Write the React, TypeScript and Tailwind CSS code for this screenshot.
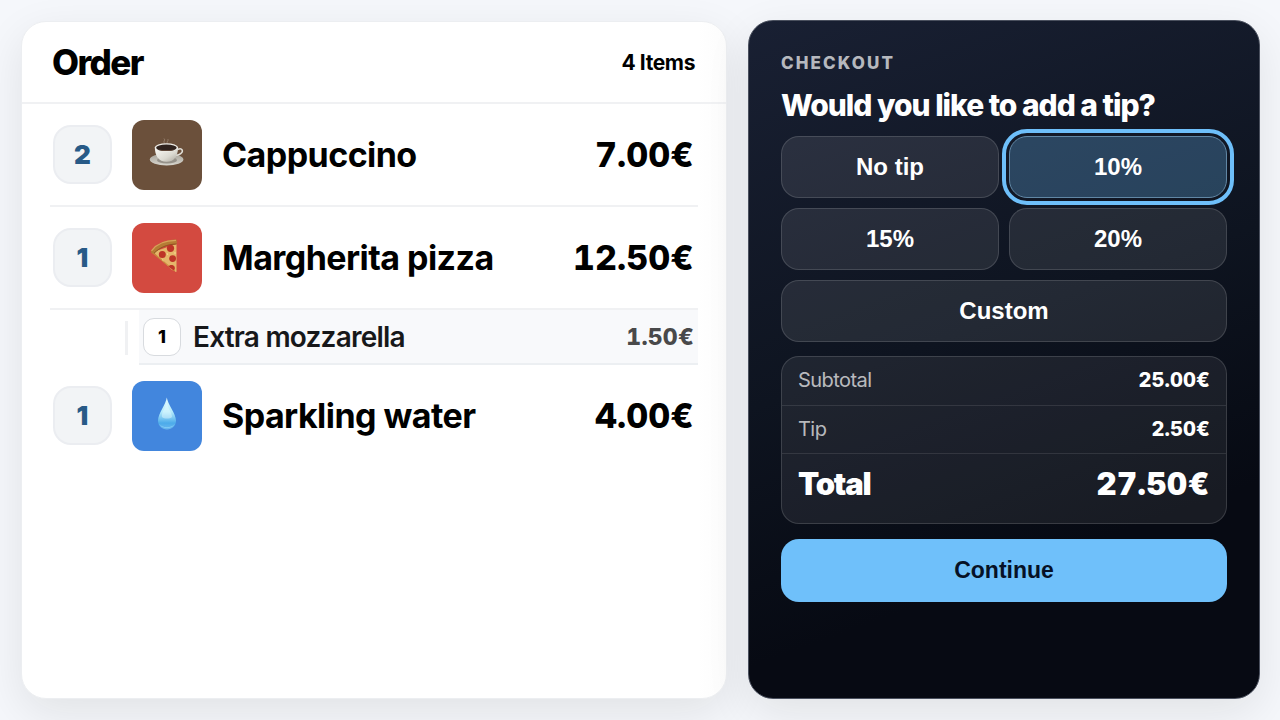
import type { ReactNode } from "react";

function CoffeeIcon() {
  return (
    <svg width="36" height="32" viewBox="0 0 36 32">
      <defs>
        <linearGradient id="cup" x1="0" y1="0" x2="1" y2="1">
          <stop offset="0" stopColor="#fbfaf6" />
          <stop offset="0.6" stopColor="#dcdad2" />
          <stop offset="1" stopColor="#a9a59b" />
        </linearGradient>
        <linearGradient id="saucer" x1="0" y1="0" x2="0" y2="1">
          <stop offset="0" stopColor="#a5a198" />
          <stop offset="1" stopColor="#d8d6ce" />
        </linearGradient>
      </defs>
      <path d="M15.5 6.5C13.5 4 17 3.500 15 1.500M18.500 6.500C17 4.500 20.500 3.500 18.500 2" fill="none" stroke="#c9b9a9" strokeWidth="0.9" opacity="0.45" />
      <ellipse cx="17.600" cy="22.500" rx="16.800" ry="6" fill="url(#saucer)" />
      <ellipse cx="18" cy="23.200" rx="10" ry="3.400" fill="#96928a" />
      <path d="M28.500 12.500c5-2.200 6.200 2 3.200 4.200-1.500 1.200-3.500 1.500-5 1.700" fill="none" stroke="#e1dfd8" strokeWidth="1.500" />
      <path d="M5.800 10.500c.3 6.500 2.200 10.800 6.500 13.200 3.200 1.400 7.200 1.400 10.500 0 4.300-2.400 6-6.700 6.300-13.200z" fill="url(#cup)" />
      <ellipse cx="17.400" cy="10.500" rx="11.700" ry="4.300" fill="#eeece6" />
      <ellipse cx="17.400" cy="10.800" rx="10.300" ry="3.300" fill="#30231e" />
      <path d="M9.500 12.500c4 2 12 2 16 0-4 1-12 1-16 0z" fill="#705544" />
    </svg>
  );
}

function PizzaIcon() {
  return (
    <svg className="mr-[7px]" width="28" height="34" viewBox="0 0 28 34">
      <path d="M3 13L26.500 5v27.500c-.5 1-1.200.5-1.700-.7L22 31z" fill="#e5b66b" />
      <path d="M3 13L24.800 31.500l-.2 1L2 14z" fill="#c98b3d" />
      <path d="M.8 12.800C5 5.500 15 .8 26.200.6c.8.700.9 3.400.3 4.300C17 5 9.500 8.800 4 14.600 2.500 15 .8 13.800.8 12.800z" fill="#b57b35" />
      <path d="M1.500 11.800C6 5.500 15 1.500 26 1.400" fill="none" stroke="#d7a259" strokeWidth="1.300" />
      <path d="M4 14.300C9.500 8.600 17 5.200 26.500 5" fill="none" stroke="#87501d" strokeWidth="0.900" />
      <circle cx="20.500" cy="9.300" r="3.600" fill="#bd3427" />
      <circle cx="12.300" cy="15.600" r="3.500" fill="#bd3427" />
      <circle cx="22.600" cy="19.600" r="3.400" fill="#bd3427" />
      <path d="M18.200 27.600c1.500-2.300 5.300-2.100 6.500.3.400 1.500 0 2.500-.8 3.600z" fill="#bd3427" />
      <path d="M12 20.500l1.500 1.400M17 14l.8 2M25 13v2" stroke="#f6d993" strokeWidth="1" />
    </svg>
  );
}

function DropIcon() {
  return (
    <svg width="20" height="33" viewBox="0 0 20 33">
      <defs>
        <linearGradient id="drop" x1="0" y1="0" x2="0" y2="1">
          <stop offset="0" stopColor="#e4fbff" />
          <stop offset="0.45" stopColor="#b5ebfb" />
          <stop offset="0.8" stopColor="#4cabea" />
          <stop offset="1" stopColor="#6bb9ef" />
        </linearGradient>
      </defs>
      <path d="M9.800.5C9 7 1 17 1 23.500 1 29 5 32.500 10 32.500s9-3.500 9-9C19 17 10.600 7 9.800.5z" fill="url(#drop)" />
      <path d="M2.200 26.500c2 5 13.600 5 15.600 0-1.500 6-14 6-15.600 0z" fill="#8fd2f7" opacity="0.800" />
      <path d="M9.700 5C8.500 11 4 16 5 20c2 2 8 2 10 0 0-4-4.300-9-5.300-15z" fill="#e6fbff" opacity="0.450" />
    </svg>
  );
}

function OrderRow({ qty, tile, icon, name, price, divider = true }: {
  qty: number;
  tile: string;
  icon: ReactNode;
  name: string;
  price: string;
  divider?: boolean;
}) {
  return (
    <div className={`flex items-center pr-[4px] pl-[3px] ${divider ? "h-[103px] border-b-2 border-[#f0f1f3]" : "h-[101px]"}`}>
      <div className="flex size-[59px] items-center justify-center rounded-[18px] border-2 border-[#ebedf1] bg-[#f2f4f6] text-[26px] font-black text-[#285a87]">
        {qty}
      </div>
      <div className={`ml-5 flex size-[70px] items-center justify-center rounded-xl pb-1 ${tile}`}>{icon}</div>
      <div className="ml-5 flex-1 text-[34px] font-bold tracking-[-0.55px]">{name}</div>
      <div className="text-[34px] font-extrabold tracking-[0.1px] tabular-nums">{price}</div>
    </div>
  );
}

function TipButton({ label, selected = false, wide = false }: { label: string; selected?: boolean; wide?: boolean }) {
  return (
    <button
      className={`h-[62px] rounded-[18px] border font-['Liberation_Sans',sans-serif] text-2xl font-bold ${wide ? "col-span-2" : ""} ${
        selected
          ? "border-[#6187a5] bg-[#6ec0fa]/27 outline-4 outline-offset-3 outline-[#6ebffa]"
          : "border-white/14 bg-white/9"
      }`}
    >
      {label}
    </button>
  );
}

export default function App() {
  return (
    <main className="flex h-[720px] w-[1280px] gap-[21px] overflow-hidden bg-[#f5f7fb] p-[21px] pr-5 font-[Inter,sans-serif] text-black">
      {/* Order */}
      <section className="w-[706px] rounded-[25px] border border-[#eceef1] bg-white bg-linear-to-r from-white from-96% to-[#fcfcfc] shadow-[0_14px_45px_rgba(20,20,15,0.09)]">
        <header className="flex h-[82px] items-center justify-between border-b-2 border-[#f0f1f3] pr-[31px] pl-[30px]">
          <h1 className="text-[35px] font-extrabold tracking-[-1.6px]">Order</h1>
          <span className="pt-[2px] text-[21px] font-bold tracking-[-0.4px]">4 Items</span>
        </header>

        <div className="mr-7 ml-7">
          <OrderRow qty={2} tile="bg-[#6b503b]" icon={<CoffeeIcon />} name="Cappuccino" price="7.00€" />
          <OrderRow qty={1} tile="bg-[#d34a40]" icon={<PizzaIcon />} name="Margherita pizza" price="12.50€" />
          <div className="flex h-[55px] items-center">
            <div className="ml-[75px] h-[34px] w-[3px] bg-[#f0f1f3]" />
            <div className="ml-[11px] flex h-full flex-1 items-center border-b-2 border-[#eceff2] bg-[#f8f9fb] pr-[4px] pl-1">
              <div className="flex size-[38px] items-center justify-center rounded-[11px] border border-[#d8dbdf] bg-white text-lg font-extrabold">1</div>
              <div className="ml-3 flex-1 pt-px text-[28px] font-semibold tracking-[-0.8px] text-[#17181a]">Extra mozzarella</div>
              <div className="pt-px text-[23px] font-extrabold tracking-[0.2px] text-[#49494a] tabular-nums">1.50€</div>
            </div>
          </div>
          <OrderRow qty={1} tile="bg-[#4286dd]" icon={<DropIcon />} name="Sparkling water" price="4.00€" divider={false} />
        </div>
      </section>

      {/* Checkout */}
      <section className="-mt-px flex-1 rounded-[25px] border border-[#4a505e] bg-linear-160 from-[#192033] via-[#0e1420] via-45% to-[#070a13] to-75% px-8 pt-8 text-white shadow-[0_14px_45px_rgba(20,20,15,0.09)]">
        <div className="h-[20px] text-[17px] leading-[20px] font-extrabold tracking-[2.1px] text-white/70">CHECKOUT</div>
        <h2 className="mt-3 h-[40px] text-[30px] leading-[40px] font-extrabold tracking-[-1.02px]">Would you like to add a tip?</h2>

        <div className="mt-[11px] grid grid-cols-2 gap-[10px]">
          <TipButton label="No tip" />
          <TipButton label="10%" selected />
          <TipButton label="15%" />
          <TipButton label="20%" />
          <TipButton label="Custom" wide />
        </div>

        <div className="mt-[14px] h-[168px] rounded-[18px] border border-white/14 bg-white/7 text-xl">
          <div className="flex h-[49px] items-center justify-between border-b border-white/10 px-4 pb-[2px]">
            <span className="tracking-[-0.55px] text-white/70">Subtotal</span>
            <span className="font-extrabold tracking-[0.1px] tabular-nums">25.00€</span>
          </div>
          <div className="flex h-[48px] items-center justify-between border-b border-white/10 px-4 pb-[2px]">
            <span className="tracking-[-0.55px] text-white/70">Tip</span>
            <span className="font-extrabold tracking-[0.1px] tabular-nums">2.50€</span>
          </div>
          <div className="flex h-[60px] items-center justify-between px-4 text-[31px] font-black">
            <span className="tracking-[-1.2px]">Total</span>
            <span className="tracking-[0.6px] tabular-nums">27.50€</span>
          </div>
        </div>

        <button className="mt-[15px] h-[63px] w-full rounded-[18px] bg-[#6fc0fa] font-['Liberation_Sans',sans-serif] text-[23px] font-bold text-[#061126]">
          Continue
        </button>
      </section>
    </main>
  );
}
